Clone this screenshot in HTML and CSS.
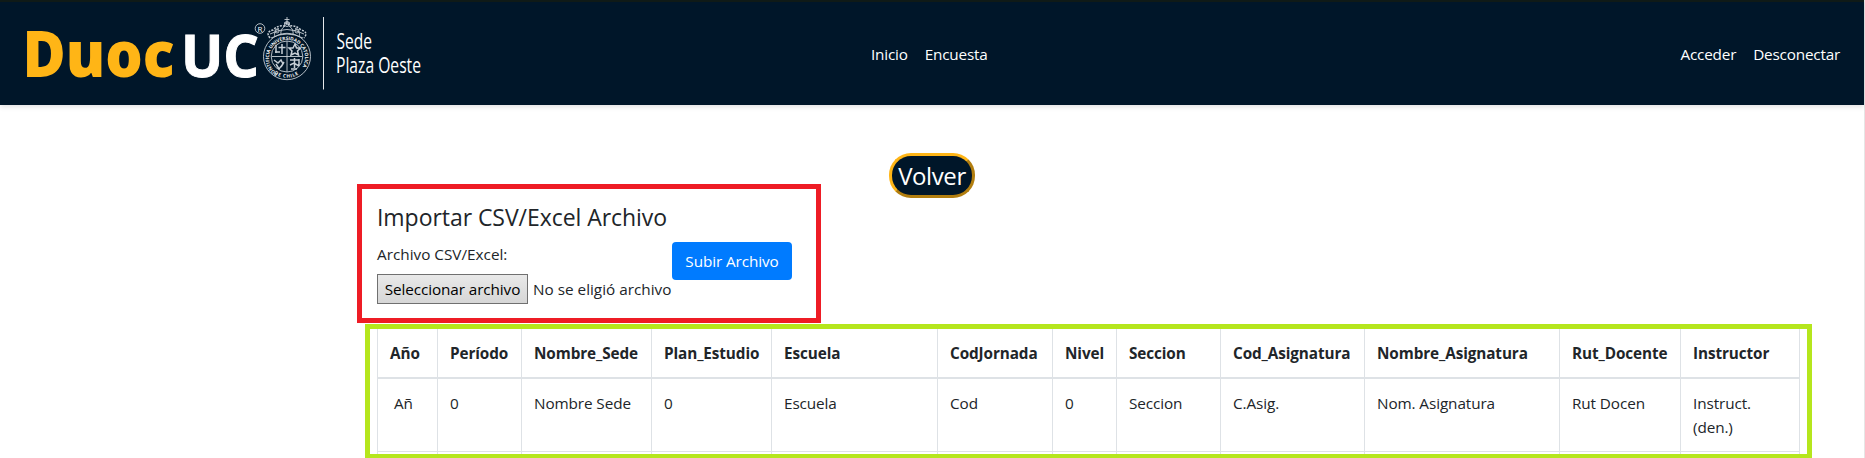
FILE: index.html
```html
<!DOCTYPE html>
<html lang="es">
<head>
<meta charset="utf-8">
<title>Duoc UC - Importar archivo</title>
<link rel="stylesheet" href="styles.css">
</head>
<body>
<div class="page">
<header class="navbar">
  <svg class="logo" width="450" height="103" viewBox="0 2 450 103" role="img" aria-label="Duoc UC Sede Plaza Oeste">
    <g class="brand">
      <text class="duoc" x="22.500" y="76.500" textLength="152" lengthAdjust="spacingAndGlyphs">Duoc</text>
      <text class="uc" x="181" y="76.500" textLength="78" lengthAdjust="spacingAndGlyphs">UC</text>
    </g>
    <circle class="line" cx="260" cy="28.5" r="4.8"/>
    <text class="reg" x="257.5" y="31.6">R</text>
    <g class="line">
      <ellipse cx="287" cy="56.5" rx="23.5" ry="23.2"/>
      <ellipse cx="287" cy="56.5" rx="15.8" ry="15.5"/>
      <path d="M287 41v31M271.500 56.500h31"/>
      <path class="bold" d="M282 44v10M278.500 47.500h7M275 52h5M276 45v8M274 60l4 3 3-3 2 4-4 5-3-5M281 67l3-5"/>
      <path class="bold" d="M295 44l1.500 4h4l-3 3 1 4-3.500-2-4 2 1-4-3-3h4zM290 60h9M294.500 58v10M290 65l4-2 5 3M291 69h6M299 59v6"/>
      <path class="bold" stroke-dasharray="2 1.200" d="M270 38q-5-6 3-8 5-5 11-4l3-3 3 3q6-1 11 4 8 2 3 8"/>
      <path d="M271 38q16-8 32 0M270 34q17-9 34 0M275 37q-2-6 4-9M281 35q-1-6 4-9M299 37q2-6-4-9M293 35q1-6-4-9M287 17v8M284.500 19.500h5M284 23h6"/>
      <circle cx="287" cy="24" r="2.500"/>
      <circle cx="277" cy="31" r="2"/>
      <circle cx="297" cy="31" r="2"/>
    </g>
    <path id="motto" fill="none" d="M278 73.500A18 18 0 1 1 296 73.500"/>
    <text class="motto"><textPath href="#motto" textLength="84">PONTIFICIA UNIVERSIDAD CATOLICA</textPath></text>
    <path id="chile" fill="none" d="M274 73.500Q287 82 300 73.500"/>
    <text class="motto"><textPath href="#chile" textLength="26">DE CHILE</textPath></text>
    <path class="divider" d="M323.500 17v72.500"/>
    <text class="sede" x="336.500" y="49" textLength="35.500" lengthAdjust="spacingAndGlyphs">Sede</text>
    <text class="sede" x="336" y="73" textLength="85" lengthAdjust="spacingAndGlyphs">Plaza Oeste</text>
  </svg>
  <nav class="links center"><a>Inicio</a><a>Encuesta</a></nav>
  <nav class="links right"><a>Acceder</a><a>Desconectar</a></nav>
</header>
<main>
  <button class="back">Volver</button>
  <section class="import">
    <h4>Importar CSV/Excel Archivo</h4>
    <div class="form">
      <div class="field">
        <label>Archivo CSV/Excel:</label>
        <div class="file"><span class="choose">Seleccionar archivo</span><span class="none">No se eligió archivo</span></div>
      </div>
      <button class="submit">Subir Archivo</button>
    </div>
  </section>
  <section class="results">
    <table>
      <colgroup><col class="c1"><col class="c2"><col class="c3"><col class="c4"><col class="c5"><col class="c6"><col class="c7"><col class="c8"><col class="c9"><col class="c10"><col class="c11"><col class="c12"></colgroup>
      <thead><tr><th>Año</th><th>Período</th><th>Nombre_Sede</th><th>Plan_Estudio</th><th>Escuela</th><th>CodJornada</th><th>Nivel</th><th>Seccion</th><th>Cod_Asignatura</th><th>Nombre_Asignatura</th><th>Rut_Docente</th><th>Instructor</th></tr></thead>
      <tbody>
        <tr><td class="year">Añ</td><td>0</td><td>Nombre Sede</td><td>0</td><td>Escuela</td><td>Cod</td><td>0</td><td>Seccion</td><td>C.Asig.</td><td>Nom. Asignatura</td><td>Rut Docen</td><td>Instruct. (den.)</td></tr>
        <tr><td></td><td></td><td></td><td></td><td></td><td></td><td></td><td></td><td></td><td></td><td></td><td></td></tr>
      </tbody>
    </table>
  </section>
</main>
</div>
</body>
</html>
```
FILE: styles.css
```css
* { box-sizing: border-box; }
body {
  margin: 0;
  height: 458px;
  overflow: hidden;
  background: #fff;
  color: #212529;
  font: 15.3px/24px "Open Sans", "Noto Sans", sans-serif;
  letter-spacing: -0.1px;
}
button { font: inherit; letter-spacing: inherit; white-space: nowrap; }
.page { height: 458px; border-right: 1px solid #e6e6e6; }
.navbar {
  display: grid;
  grid-template-columns: 871px 1fr auto;
  align-items: center;
  height: 105px;
  padding-right: 24px;
  border-top: 2px solid #0f1a17;
  background: #001629;
  box-shadow: 0 2px 5px rgba(0, 0, 0, .12);
}
.logo { display: block; font-family: "Open Sans", sans-serif; letter-spacing: 0; }
.brand { font-weight: 800; }
.duoc { font-size: 64px; fill: #ffb516; }
.uc { font-size: 59px; font-weight: 700; fill: #fff; stroke: #fff; stroke-width: 1; }
.reg { font-size: 8px; fill: #fff; }
.sede { font-size: 21.500px; fill: #fff; }
.line { fill: none; stroke: #c6ced5; stroke-width: .9; }
.bold { stroke-width: 1.500; }
.motto { font-size: 4.800px; font-weight: 700; fill: #eef1f3; }
.divider { stroke: #e4e7ea; stroke-width: 1; }
.links { display: flex; gap: 17px; color: #fff; }
.center { letter-spacing: -.2px; }
.right { letter-spacing: -.2px; }
main { display: flex; flex-direction: column; align-items: flex-start; }
.back {
  align-self: center;
  width: 86px;
  height: 45px;
  margin-top: 48px;
  padding: 0;
  border: 3px solid;
  border-color: #ffb516 #b27e0f #b27e0f #ffb516;
  border-radius: 22px;
  background: #001629;
  color: #fff;
  font-size: 24px;
  letter-spacing: -.4px;
  line-height: 39px;
}
.import {
  width: 464px;
  height: 139px;
  margin: -14px 0 0 357px;
  padding: 13px 15px;
  border: 5px solid #ee1c25;
}
h4 { margin: 0 0 10px; font-size: 23px; font-weight: 400; line-height: 30px; letter-spacing: -.05px; }
.form { display: flex; align-items: flex-start; }
.field { width: 295px; white-space: nowrap; }
label { display: block; height: 32px; letter-spacing: 0; }
.file { display: flex; gap: 5px; height: 30px; line-height: 30px; }
.none { letter-spacing: 0; }
.choose {
  width: 151px;
  border: 1px solid #707070;
  background: linear-gradient(#e9e9e9, #d6d6d6);
  color: #000;
  line-height: 28px;
  text-align: center;
}
.submit {
  width: 120px;
  height: 38px;
  padding: 0;
  border: 0;
  border-radius: 4px;
  background: #007bff;
  color: #fff;
}
.results {
  width: 1447px;
  height: 134px;
  margin: 1px 0 0 365px;
  padding-left: 7px;
  border: 5px solid #b5e61d;
  border-bottom-width: 4px;
  overflow: hidden;
}
table { width: 1423px; margin-top: -1px; table-layout: fixed; border-collapse: collapse; }
th, td { height: 73px; padding: 12px; border: 1px solid #dee2e6; text-align: left; vertical-align: top; }
th { height: 49px; padding-bottom: 11px; border-bottom-width: 2px; font-weight: 700; white-space: nowrap; }
.year { padding-left: 16px; }
.c1 { width: 60px; }
.c2 { width: 84px; }
.c3 { width: 130px; }
.c4 { width: 120px; }
.c5 { width: 166px; }
.c6 { width: 115px; }
.c7 { width: 64px; }
.c8 { width: 104px; }
.c9 { width: 144px; }
.c10 { width: 195px; }
.c11 { width: 121px; }
.c12 { width: 119px; }
```
